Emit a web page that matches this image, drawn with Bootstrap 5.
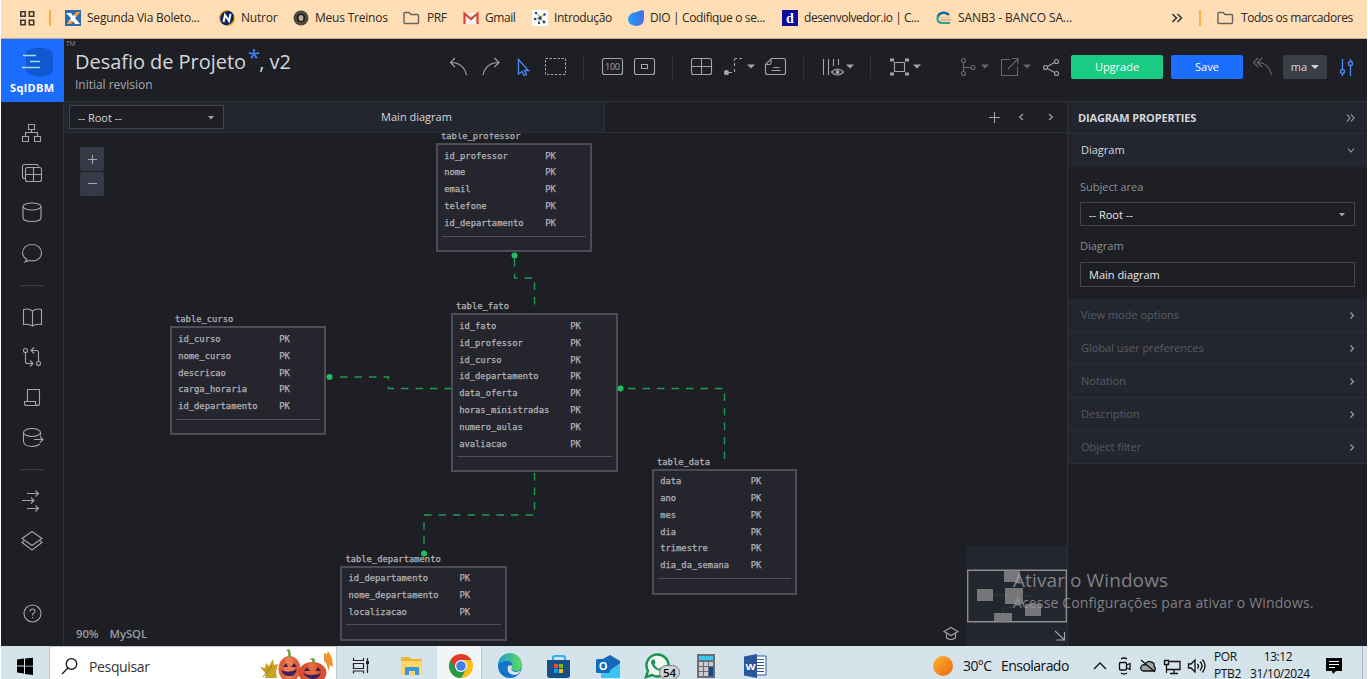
<!DOCTYPE html>
<html lang="pt-BR">
<head>
<meta charset="utf-8">
<meta name="viewport" content="width=device-width, initial-scale=1">
<title>Desafio de Projeto - SqlDBM</title>
<link href="https://cdn.jsdelivr.net/npm/bootstrap@5.3.0/dist/css/bootstrap.min.css" rel="stylesheet">
<style>
:root{--bg:#1e1f24;--panel:#23262e;--line:#2d3039;--ic:#a3a5ab;--dim:#575b65}
body{height:679px;overflow:hidden;background:#fff;font-family:"Open Sans","Noto Sans",sans-serif;font-size:11px;line-height:16px;color:#d5d7dc}
.screen{width:1366px;height:679px;margin-left:1px;background:var(--bg)}
svg{display:block;flex:none}
.txt{white-space:nowrap}
/* bookmarks */
.marks{height:39px;background:#ffddb5;border-bottom:1px solid #c9ad8b;color:#2c2824;padding-bottom:3px;font-size:12px}
.marks .bm{flex:none;gap:6px;white-space:nowrap}
.w154{width:154px}.w74{width:74px}.w110{width:110px}.w60{width:60px}.w69{width:69px}.w96{width:96px}
.w236{width:236px}
.bm .txt{letter-spacing:-.22px}
.bm .t-narrow{letter-spacing:-.45px}
.bm .t-mid{letter-spacing:-.36px}
.bm .t-wide{letter-spacing:-.1px}
/* header */
.topbar{height:62px}
.tools{padding-top:16px}
.logo{width:63px;height:63px;background:#1b6dff;z-index:2}
.logo text{font-family:"Open Sans",sans-serif}
.heading{width:381px;padding:9px 0 0 11px;position:relative}
.heading .ttl{font-size:20px;line-height:28px;letter-spacing:-.04px}
.heading .star{color:#3f86ff;font-size:22px;line-height:10px;position:relative;top:-4px;margin-left:2px;letter-spacing:-1px}
.heading .rev{font-size:12px;line-height:17px;color:#a5a7ac;letter-spacing:-.02px}
.heading .tm{position:absolute;left:2px;top:0;font-size:6.500px;line-height:9px;color:#8d9097}
.ic{fill:none;stroke:var(--ic);stroke-width:1.1}
.dimic{fill:none;stroke:#656870;stroke-width:1.1}
.btn-top{height:24px;padding:0;font-size:11px;line-height:24px;border:0;border-radius:2px;color:#fff;flex:none}
.b-up{width:92px;background:#1acb84}.b-save{width:72px;background:#1b6dff;margin-left:8px}.b-ma{width:44px;background:#3a3e49;color:#d5d7dc}
/* side */
.work{height:545px}
.side{width:63px;border-right:1px solid var(--line);padding-top:11px}
/* tabs */
.tabs{height:32px;border-top:1px solid var(--line);border-bottom:1px solid var(--line)}
.tabs .picker{width:155px;height:24px;margin:3px 0 0 5px;border:1px solid #41444f;background:var(--bg);padding:2px 8px 0}
.tabs .tab{width:541px;background:var(--panel);border-right:1px solid var(--line)}
.tabs .name{width:380px;padding:0 0 1px 5px}
/* canvas */
.canvas{position:relative;overflow:hidden;font-family:"DejaVu Sans Mono",monospace}
.ent{position:absolute;width:156px;font-size:8.8px;line-height:16.8px;color:#b3b3b7;-webkit-text-stroke:.25px #b3b3b7}
.ent .cap{position:absolute;left:5px;top:-15px;white-space:nowrap}
.ent .box{border:2px solid #4b4c58;background:#25252d;padding:2.6px 4px 0 3.500px;height:var(--h)}
.ent .r{height:16.8px;padding-left:2.700px}
.ent .r span:first-child{width:var(--k);flex:none}
.ent .rule{height:1px;background:#4f505b;margin-top:4px}
.zoomer{position:absolute;left:16px;top:14px;width:24px;gap:1px}
.zoomer div{height:24px;background:#363a46;border-radius:2px}
.foot{position:absolute;left:12px;top:493px;color:#9a9ca2;font-family:"Open Sans",sans-serif;font-size:11.3px;font-weight:600;gap:11px}
.foot span{letter-spacing:-.05px}
.wire{position:absolute;left:0;top:0}
/* properties */
.props-wrap{width:300px;border-left:1px solid var(--line)}
.p-head{height:32px;background:var(--panel);border-top:1px solid var(--line);padding:1px 12px 0 10px;font-weight:700;letter-spacing:-.15px}
.p-sec{height:34px;background:var(--panel);border-top:1px solid var(--line);padding:0 12px 1px 13px}
.p-form{height:132px;padding:12px 12px 0}
.p-form label{color:#8b8e96;height:16px;display:block}
.fld{height:24px;border:1px solid #41444f;padding:2px 8px 0;color:#e6e7ea;margin-top:7px}
.fld.tall{height:25px;margin-top:8px;padding-top:1px}
.p-form .second{margin-top:12px}
.p-row{height:33px;background:var(--panel);border-bottom:1px solid var(--line);padding:0 12px 0 13px;color:var(--dim)}
.wm{position:absolute;left:1012px;top:568px;color:rgba(158,158,160,.78);z-index:5}
.wm .a{font-size:19px;line-height:24px;letter-spacing:.1px}
.wm .b{font-size:14px;line-height:22px;letter-spacing:.14px}
/* taskbar */
.task{height:33px;background:#d5e3ea;color:#111;overflow:hidden}
.search{width:288px;background:#fff;border:1px solid #c3c8cb;border-bottom:0}
.search .q{width:168px;font-size:14px;padding:12px 0 0 1px;letter-spacing:-.35px;color:#333}
.chromecell{background:#f1f5f8}
.clock{font-size:12px;line-height:16.500px;letter-spacing:-.4px;padding-top:3px}
.c-lang{width:36px}.c-time{width:56px}
.wx{font-size:14px;padding-top:12px;width:125px}
.wx .deg{width:38px;letter-spacing:-.6px}
.wx .sky{letter-spacing:-.55px}
</style>
</head>
<body>
<div class="screen d-flex flex-column position-relative">

<div class="marks d-flex align-items-center">
  <svg width="64" height="36" viewBox="1 0 64 36"><g fill="none" stroke="#3c3833" stroke-width="1.6"><path d="M20.8 11.8h4.4v4.4h-4.4zM29.3 11.8h4.4v4.4h-4.4zM20.8 20.3h4.4v4.4h-4.4zM29.3 20.3h4.4v4.4h-4.4z"/></g><path d="M50 10v16" stroke="#ffad42" stroke-width="2"/></svg>
  <div class="bm w154 d-flex align-items-center"><svg width="16" height="16"><path d="M0 0h16v16H0z" fill="#2b6cae"/><path d="M1 3h5l2 3 4-4h3l-5 6 5 6h-5l-2-3-2 3H2l4-6z" fill="#fff"/><path d="M11 2h4l-4 5-2-2zM6 10l2 2-2 2H2z" fill="#f89b2d"/></svg><span class="txt">Segunda Via Boleto...</span></div>
  <div class="bm w74 d-flex align-items-center"><svg width="16" height="16"><circle cx="8" cy="8" r="7.5" fill="#17255e"/><path d="M1 11A7.5 7.5 0 0 1 8 .5M9 15.5A7.5 7.5 0 0 0 15.300 6" fill="none" stroke="#f3bf2a" stroke-width="1.600"/><path d="M4.500 12l1.500-7 4 6 1.500-7" fill="none" stroke="#fff" stroke-width="2"/></svg><span class="txt">Nutror</span></div>
  <div class="bm w110 d-flex align-items-center"><svg width="16" height="16"><circle cx="8" cy="8" r="7.500" fill="#4a463d"/><circle cx="8" cy="8" r="5" fill="#1d1c19" stroke="#5f5b4c" stroke-width="1"/><ellipse cx="8" cy="8" rx="2.400" ry="3" fill="#b5ae99"/></svg><span class="txt">Meus Treinos</span></div>
  <div class="bm w60 d-flex align-items-center"><svg width="18" height="16"><path d="M1 3.500q0-1 1-1h4l2 2h6.500q1 0 1 1v7q0 1-1 1H2q-1 0-1-1z" fill="none" stroke="#67625b" stroke-width="1.400"/></svg><span class="txt t-narrow">PRF</span></div>
  <div class="bm w69 d-flex align-items-center"><svg width="16" height="16"><path d="M1 3h14v11H1z" fill="#f3f0ef"/><path d="M1.500 14V3.500L8 9l6.500-5.500V14" fill="none" stroke="#db4437" stroke-width="2.200"/></svg><span class="txt t-narrow">Gmail</span></div>
  <div class="bm w96 d-flex align-items-center"><svg width="16" height="16"><path d="M0 0h16v16H0z" fill="#fff"/><path d="M4 3l5 4 4-3M3 9l5-1 4 4M7 13l1-6" stroke="#b9c98a" stroke-width="1.500" fill="none"/><g fill="#28406f"><circle cx="4" cy="3" r="1.200"/><circle cx="8" cy="8" r="1.700"/><circle cx="12.500" cy="4.500" r="1.200"/><circle cx="3" cy="9" r="1.200"/><circle cx="12" cy="12" r="1.400"/><circle cx="7" cy="13" r="1.200"/></g></svg><span class="txt t-mid">Introdução</span></div>
  <div class="bm w154 d-flex align-items-center"><svg width="16" height="16"><defs><linearGradient id="dio"><stop stop-color="#1aa0ef"/><stop offset="1" stop-color="#4b6be6"/></linearGradient></defs><path d="M0 9Q1 3 7 2.500L14 0q2 0 2 2v6q0 8-8 8-8-1-8-7" fill="url(#dio)"/></svg><span class="txt t-mid">DIO | Codifique o se...</span></div>
  <div class="bm w154 d-flex align-items-center"><svg width="16" height="16"><path d="M0 0h16v16H0z" fill="#0b0b9c"/><text x="4" y="13" font-size="14" font-weight="700" fill="#fff" font-family="Liberation Serif">d</text></svg><span class="txt t-narrow">desenvolvedor.io | C...</span></div>
  <div class="bm w236 d-flex align-items-center"><svg width="16" height="16"><path d="M2 7a6 5 0 0 1 11-2" fill="none" stroke="#136a95" stroke-width="2.500"/><path d="M2 6q-2 7 5 7h7" fill="none" stroke="#2aa48d" stroke-width="2.200"/><path d="M4 7.500h11" stroke="#d9cbb0" stroke-width="1.500"/><path d="M5 10h10" stroke="#e6946d" stroke-width="1.200"/></svg><span class="txt t-wide">SANB3 - BANCO SA...</span></div>
  <svg width="45" height="36" viewBox="1172 0 45 36"><path d="M1172.500 14l4 4-4 4M1177.500 14l4 4-4 4" fill="none" stroke="#3c3833" stroke-width="1.600"/><path d="M1200 10v16" stroke="#ffad42" stroke-width="2"/></svg>
  <div class="bm d-flex align-items-center"><svg width="18" height="16"><path d="M1 3.500q0-1 1-1h4l2 2h6.500q1 0 1 1v7q0 1-1 1H2q-1 0-1-1z" fill="none" stroke="#67625b" stroke-width="1.400"/></svg><span class="txt t-narrow">Todos os marcadores</span></div>
</div>

<header class="topbar d-flex">
  <svg class="logo position-relative" viewBox="1 39 63 63"><path d="M26 54q0-5 14-6.500 13 1.500 13 6.500v16q0 5-13 7-14-2-14-7z" fill="#1157d0"/><path d="M23 55.500h13M30 61.500h10M22 67.500h18" stroke="#a5dcff" stroke-width="1.600"/><text x="10" y="91.500" font-size="11" font-weight="700" fill="#fff" textLength="44">SqlDBM</text></svg>
  <div class="heading"><span class="tm">TM</span>
    <div class="ttl txt">Desafio de Projeto<span class="star">*</span>, v2</div>
    <div class="rev txt">Initial revision</div>
  </div>
  <div class="tools d-flex">
    <svg class="ic" width="62" height="24" viewBox="445 55 62 24"><path d="M455 58l-4.500 4.500 4.500 4.500M450.500 62.500q13 0 16 12.500M494.500 58l4.500 4.500-4.500 4.500M499 62.500q-13 0-16 12.500"/></svg>
    <svg width="65" height="24" viewBox="507 55 65 24"><path d="M518.500 59.500V74l3.500-2.500 2 4 2.500-1-2-4h4z" fill="none" stroke="#4b8bf5" stroke-width="1.300"/><path d="M545.500 58.500h20v16h-20z" fill="none" stroke="#a3a5ab" stroke-dasharray="2.500 1.500"/></svg>
    <svg class="ic" width="110" height="24" viewBox="572 55 110 24"><path d="M583.500 55v24M672.500 55v24" stroke="#2f323a"/><rect x="602.500" y="58.500" width="20" height="16" rx="2"/><rect x="634.500" y="58.500" width="20" height="16" rx="2"/><path d="M641.500 64.500h6v4h-6z"/><text x="605" y="70" font-size="9" textLength="15" fill="#a3a5ab" stroke="none">100</text></svg>
    <svg class="ic" width="128" height="24" viewBox="682 55 128 24"><rect x="691.500" y="58.500" width="20" height="16" rx="2"/><path d="M701.500 58.500v16M691.500 66.500h20"/><circle cx="726.500" cy="72.500" r="2" fill="#a3a5ab"/><path d="M728 72.500h4M734.500 72v-3M734.500 66v-3M734.500 61v-1.500q0-1 1-1H737M739.500 58.500h2.500"/><path d="M747 64.500h8l-4 4z" fill="#a3a5ab" stroke="none"/><path d="M771.500 58.500h12q2 0 2 2v12q0 2-2 2h-16q-2 0-2-2v-8zM765.500 64.500h4q1.500 0 1.500-1.500v-4M773.500 67.500h6M771.500 70.500h9"/><path d="M803.500 55v24" stroke="#2f323a"/></svg>
    <svg class="ic" width="135" height="24" viewBox="810 55 135 24"><path d="M823.500 59v16M828.500 59v16M833.500 59v7M838.500 59v6"/><path d="M831.500 72q6-6 12 0-6 6-12 0z"/><circle cx="837.500" cy="72" r="1.500" fill="#a3a5ab"/><path d="M846 64.500h8l-4 4zM913 64.500h8l-4 4z" fill="#a3a5ab" stroke="none"/><path d="M870.500 55v24" stroke="#2f323a"/><path d="M894.500 62.500h10v9h-10z"/><path d="M890 58.500h4v3h-4zM905 58.500h4v3h-4zM890 72.500h4v3h-4zM905 72.500h4v3h-4z" fill="#a3a5ab" stroke="none"/></svg>
    <svg class="dimic" width="126" height="24" viewBox="945 55 126 24"><circle cx="963.500" cy="60.500" r="2"/><circle cx="963.500" cy="73.500" r="2"/><circle cx="973" cy="67.500" r="2"/><path d="M963.500 62.500v9M963.500 67.500h7.500"/><path d="M981 64.500h8l-4 4zM1023 64.500h8l-4 4z" fill="#656870" stroke="none"/><path d="M1010 59.500h-8.500v16h16v-9M1008 69l10-10M1012 58.500h6v6"/><g stroke="#a3a5ab"><circle cx="1045.500" cy="67.500" r="2"/><circle cx="1056.500" cy="61.500" r="2"/><circle cx="1056.500" cy="73.500" r="2"/><path d="M1047.500 66.500l7-4M1047.500 68.500l7 4"/></g></svg>
    <button class="btn btn-top b-up">Upgrade</button><button class="btn btn-top b-save">Save</button>
    <svg class="dimic" width="40" height="24" viewBox="1243 55 40 24"><path d="M1258 58l-4.500 4.500 4.500 4.500M1262 58l-4.500 4.500 4.500 4.500M1257.500 62.500q11 0 14 12.500"/></svg>
    <button class="btn btn-top b-ma d-flex align-items-center justify-content-center gap-1">ma <svg width="8" height="4"><path d="M0 0h8L4 4z" fill="#d5d7dc"/></svg></button>
    <svg width="40" height="24" viewBox="1327 55 40 24"><g fill="none" stroke="#4b8bf5" stroke-width="1.300"><path d="M1342.500 59v10M1342.500 74v2M1350.500 59v2M1350.500 66v10"/><circle cx="1342.500" cy="71.500" r="2"/><circle cx="1350.500" cy="63.500" r="2"/></g></svg>
  </div>
</header>

<div class="work d-flex">
  <nav class="side flex-shrink-0">
    <svg class="ic" width="62" height="533" viewBox="1 112 62 533">
      <path d="M28.500 124.500h6v5h-6zM22.500 136.500h6v5h-6zM34.500 136.500h6v5h-6zM31.500 129.500v3M25.500 136.500v-4h12v4"/>
      <rect x="25.500" y="167.500" width="16" height="14" rx="2"/><path d="M33.500 167.500v14M25.500 174.500h16M25 178.500h-.500q-2 0-2-2v-10q0-2 2-2h12q2 0 2 2"/>
      <ellipse cx="32" cy="206.500" rx="9" ry="3.500"/><path d="M23 206.500v11q0 4 9 4t9-4v-11"/>
      <path d="M27 259.500q-4-2-4.500-6.500c0-5 4-8.500 9.500-8.500s9.500 3.500 9.500 8.500-5 9-12 7.500l-4.500 1.500z"/>
      <path d="M20 285.500h24M20 469.500h24" stroke="#3b3e46"/>
      <path d="M23.500 309.500q5-1.500 9 1.500 4-3 9-1.500v15q-5-1-9 1.500-4-2.500-9-1.500zM32.500 311v15"/>
      <circle cx="25.500" cy="350.500" r="2"/><circle cx="38.500" cy="363.500" r="2"/><path d="M25.500 352.500v9q0 2 2 2h5M30 360.500l3 3-3 3M38.500 361.500v-9q0-2-2-2h-5M34 347.500l-3 3 3 3"/>
      <path d="M27.500 401.500v-12h12v14q0 2-2 2h-11q-2 0-2-2v-2h11v2q0 2 2 2"/>
      <ellipse cx="32" cy="432.500" rx="8.500" ry="4"/><path d="M23.500 432.500v9q1 5 8.500 5 5 0 8-2.500M40.500 432.500v3M34 439.500h9M40 436.500l3 3-3 3"/>
      <path d="M27 493.500h11M35.500 490.500l3 3-3 3M22 500.500h11M31 497.500l3 3-3 3M27 508.500h11M35.500 505.500l3 3-3 3"/>
      <path d="M32 531.500l10 7-10 7-10-7zM24 541l-2 1.500 10 7.500 10-7.500-2-1.500"/>
      <circle cx="32.500" cy="613.500" r="8.500"/><path d="M30 611.500q0-2.500 2.500-2.500t2.500 2.300q0 1.200-1.300 2-1.200.7-1.200 2.200M32.500 617v1.200"/>
    </svg>
  </nav>
  <main class="flex-grow-1 d-flex flex-column">
    <div class="tabs d-flex">
      <div class="tab d-flex"><div class="picker d-flex align-items-center justify-content-between flex-shrink-0"><span>-- Root --</span><svg width="8" height="4"><path d="M1 0h6L4 3.500z" fill="#a3a5ab"/></svg></div><div class="name text-center align-self-center">Main diagram</div></div>
      <svg class="ic ms-auto" width="87" height="30" viewBox="980 102 87 30"><path d="M989 117.500h11M994.500 112v11M1023 114l-3.500 3 3.500 3M1049 114l3.500 3-3.500 3"/></svg>
    </div>
    <div class="canvas flex-grow-1">
      <svg class="wire" width="1003" height="513" viewBox="64 133 1003 513"><g fill="none" stroke="#209a52" stroke-width="1.400" stroke-dasharray="7.500 7"><path d="M514.500 259v19h20v27"/><path d="M340 377h48.500v11.500H451"/><path d="M628 388.500h96.500V462"/><path d="M534.500 473v42H424v40"/></g></svg>
      <div class="ent" style="left:372px;top:10px;--h:109px;--k:101px"><div class="cap">table_professor</div><div class="box"><div class="r d-flex"><span>id_professor</span><span>PK</span></div><div class="r d-flex"><span>nome</span><span>PK</span></div><div class="r d-flex"><span>email</span><span>PK</span></div><div class="r d-flex"><span>telefone</span><span>PK</span></div><div class="r d-flex"><span>id_departamento</span><span>PK</span></div><div class="rule"></div></div></div>
      <div class="ent" style="left:106px;top:193.400px;--h:109px;--k:101px"><div class="cap">table_curso</div><div class="box"><div class="r d-flex"><span>id_curso</span><span>PK</span></div><div class="r d-flex"><span>nome_curso</span><span>PK</span></div><div class="r d-flex"><span>descricao</span><span>PK</span></div><div class="r d-flex"><span>carga_horaria</span><span>PK</span></div><div class="r d-flex"><span>id_departamento</span><span>PK</span></div><div class="rule"></div></div></div>
      <div class="ent" style="left:387px;top:180.400px;width:167px;--h:159px;--k:111px"><div class="cap">table_fato</div><div class="box"><div class="r d-flex"><span>id_fato</span><span>PK</span></div><div class="r d-flex"><span>id_professor</span><span>PK</span></div><div class="r d-flex"><span>id_curso</span><span>PK</span></div><div class="r d-flex"><span>id_departamento</span><span>PK</span></div><div class="r d-flex"><span>data_oferta</span><span>PK</span></div><div class="r d-flex"><span>horas_ministradas</span><span>PK</span></div><div class="r d-flex"><span>numero_aulas</span><span>PK</span></div><div class="r d-flex"><span>avaliacao</span><span>PK</span></div><div class="rule"></div></div></div>
      <div class="ent" style="left:588px;top:335.700px;width:145.400px;--h:126px;--k:90.500px"><div class="cap">table_data</div><div class="box"><div class="r d-flex"><span>data</span><span>PK</span></div><div class="r d-flex"><span>ano</span><span>PK</span></div><div class="r d-flex"><span>mes</span><span>PK</span></div><div class="r d-flex"><span>dia</span><span>PK</span></div><div class="r d-flex"><span>trimestre</span><span>PK</span></div><div class="r d-flex"><span>dia_da_semana</span><span>PK</span></div><div class="rule"></div></div></div>
      <div class="ent" style="left:276.400px;top:432.500px;width:167px;--h:75.500px;--k:111px"><div class="cap">table_departamento</div><div class="box"><div class="r d-flex"><span>id_departamento</span><span>PK</span></div><div class="r d-flex"><span>nome_departamento</span><span>PK</span></div><div class="r d-flex"><span>localizacao</span><span>PK</span></div><div class="rule"></div></div></div>
      <svg class="wire" width="1003" height="513" viewBox="64 133 1003 513"><g fill="#20bf5f"><circle cx="514.500" cy="255.500" r="3"/><circle cx="329.500" cy="377" r="3"/><circle cx="620.500" cy="388.500" r="3"/><circle cx="424" cy="553.500" r="3"/></g>
        <path d="M967 546h100v100H967z" fill="#23262f"/><g fill="#77777a"><path d="M1004 571h16v11h-16zM977 589h16v12h-16zM1005 588h18v16h-18zM1025 604h16v12h-16zM994 613h18v9h-18z"/></g><path d="M993 595h12M1003 613v-5h10v-4M1022 596h10v8" stroke="#34383f" fill="none"/><path d="M967.700 570.300h98.600v51.400h-98.600z" fill="none" stroke="#8c8c8e" stroke-width="1.400"/>
        <path d="M1055 631l9.500 9M1064.500 632v8h-8" class="ic"/><path class="ic" d="M951 627.500l7 4-7 4-7-4zM946.500 633.500v4.500q4.500 3 9 0v-4.500"/></svg>
      <div class="zoomer d-grid"><div><svg width="24" height="24"><path d="M8 12.500h9M12.500 8v9" class="ic"/></svg></div><div><svg width="24" height="24"><path d="M8 11.500h9" class="ic"/></svg></div></div>
      <div class="foot d-flex"><span>90%</span><span>MySQL</span></div>
    </div>
  </main>
  <aside class="props-wrap flex-shrink-0">
    <div class="p-head d-flex align-items-center justify-content-between"><span>DIAGRAM PROPERTIES</span><svg class="ic" width="9" height="8"><path d="M1 .500L4 4 1 7.500M5 .500L8 4 5 7.500"/></svg></div>
    <div class="p-sec d-flex align-items-center justify-content-between"><span>Diagram</span><svg class="ic" width="8" height="5"><path d="M1 .500L4 4l3-3.500"/></svg></div>
    <div class="p-form">
      <label>Subject area</label>
      <div class="fld d-flex align-items-center justify-content-between"><span>-- Root --</span><svg width="8" height="4"><path d="M1 0h6L4 3.500z" fill="#a3a5ab"/></svg></div>
      <label class="second">Diagram</label>
      <div class="fld tall d-flex align-items-center">Main diagram</div>
    </div>
    <div class="p-row d-flex align-items-center justify-content-between"><span>View mode options</span><svg class="ic" width="6" height="9"><path d="M1.500 1.500l3 3-3 3"/></svg></div>
    <div class="p-row d-flex align-items-center justify-content-between"><span>Global user preferences</span><svg class="ic" width="6" height="9"><path d="M1.500 1.500l3 3-3 3"/></svg></div>
    <div class="p-row d-flex align-items-center justify-content-between"><span>Notation</span><svg class="ic" width="6" height="9"><path d="M1.500 1.500l3 3-3 3"/></svg></div>
    <div class="p-row d-flex align-items-center justify-content-between"><span>Description</span><svg class="ic" width="6" height="9"><path d="M1.500 1.500l3 3-3 3"/></svg></div>
    <div class="p-row d-flex align-items-center justify-content-between"><span>Object filter</span><svg class="ic" width="6" height="9"><path d="M1.500 1.500l3 3-3 3"/></svg></div>
  </aside>
</div>

<div class="wm"><div class="a txt">Ativar o Windows</div><div class="b txt">Acesse Configurações para ativar o Windows.</div></div>

<footer class="task d-flex">
  <svg width="48" height="33" viewBox="1 646 48 33"><path d="M17 659.500l7-1v7h-7zM25 658.500l8-.8v8h-8zM17 666.500h7v7l-7-1zM25 666.500h8v8.500l-8-1z" fill="#000"/></svg>
  <div class="search d-flex">
    <svg width="38" height="32" viewBox="50 647 38 32"><circle cx="71.500" cy="664" r="5.300" fill="none" stroke="#111" stroke-width="1.300"/><path d="M68 668l-6 6" stroke="#111" stroke-width="1.300"/></svg>
    <div class="q">Pesquisar</div>
    <svg width="80" height="32" viewBox="256 647 80 32"><path d="M260 667l5 1 1-5 3 3 4-7 1 6 4-1-2 8 1 6h-12l1-4z" fill="#c9a227"/><path d="M263 677l9-11" stroke="#8a7a1c"/><ellipse cx="289.500" cy="669" rx="11" ry="13" fill="#e0603c"/><ellipse cx="289" cy="668" rx="5" ry="12" fill="#ee7c52"/><ellipse cx="312.500" cy="673" rx="14" ry="11" fill="#d9502f"/><ellipse cx="312" cy="673" rx="6" ry="11" fill="#e8673d"/><path d="M286 650q3 1 2 7h3q0-6-2-8M309 659q4 0 3 4h3q1-4-2-5" fill="#6fa544"/><path d="M283 667l3-4 2 4zM291 667l3-4 3 4zM281 670q8 4 16-1-2 8-8 7-6 0-8-6M304 671l3-4 3 4zM315 671l3-4 3 4zM303 673q9 4 18 0-3 7-9 6t-9-6" fill="#40205b"/><path d="M324 653l3 1 1-3 4 7 1 9-3-2-1 6-3-8-2-2z" fill="#f0932f"/></svg>
  </div>
  <svg width="100" height="33" viewBox="337 646 100 33"><g fill="none" stroke="#222" stroke-width="1.200"><path d="M353.500 658v2.500h10v-2.500M353.500 673.500v-2.500h10v2.500M353.500 663.500h10v5h-10zM367.500 658v15"/><path d="M366 661h3v3h-3z" fill="#222" stroke="none"/></g><path d="M401 657h8l2 2h11v16h-21z" fill="#eab530"/><path d="M401 661h21v14h-21z" fill="#ffd768"/><path d="M405 675v-8h14v8h-4v-4h-6v4z" fill="#3a97dd"/></svg>
  <svg class="chromecell" width="45" height="33" viewBox="437 646 45 33"><circle cx="461" cy="666" r="12" fill="#fbbf12"/><path d="M450.600 660A12 12 0 0 0 461 678l5.200-9L461 666z" fill="#27984b"/><path d="M461 660h10.400a12 12 0 0 0-20.800 0l5.200 9z" fill="#e33b2e"/><circle cx="461" cy="666" r="6" fill="#fff"/><circle cx="461" cy="666" r="4.800" fill="#3d7ff0"/><path d="M481.500 646v33" stroke="#b9c9d3"/></svg>
  <svg width="310" height="33" viewBox="482 646 310 33">
    <defs><linearGradient id="ed" x1="0" x2="1"><stop stop-color="#1f9ddc"/><stop offset="1" stop-color="#5fdc58"/></linearGradient></defs>
    <circle cx="510" cy="666" r="12" fill="#1273c8"/><path d="M498 665a12 12 0 0 1 24 0q0 7-8 6-4-1-2-4 1-6-5-6-6 0-9 4" fill="url(#ed)"/><path d="M512 667q-2 4 3 5 4 0 6-2-2 5-7 5-8-1-6-9 4-2 4 1" fill="#d5e3ea"/>
    <path d="M553 660v-2q0-2 2-2h8q2 0 2 2v2" fill="none" stroke="#29b6ee" stroke-width="2.200"/><path d="M547 660h23v15q0 3-3 3h-17q-3 0-3-3z" fill="#174f86"/><path d="M554 664h4v4h-4z" fill="#f2511b"/><path d="M559 664h4v4h-4z" fill="#7eba00"/><path d="M554 669h4v4h-4z" fill="#00a3ee"/><path d="M559 669h4v4h-4z" fill="#fdb813"/>
    <path d="M601 660l9-5 10 6v14q0 3-3 3h-13q-3 0-3-3z" fill="#1b65b8"/><path d="M601 671l8 0 11-8v12q0 3-3 3h-13q-3 0-3-3z" fill="#3bc3f2"/><rect x="596" y="659" width="14" height="14" rx="1.500" fill="#0f6cbd"/><text x="598.800" y="670" font-size="11" font-weight="700" fill="#fff">O</text>
    <path d="M646 677l2-6a11 11 0 1 1 4 4z" fill="#eef7f0" stroke="#1b9153" stroke-width="2.400"/><path d="M652 660q2-2 3 1t-1 3q2 4 5 5 2-3 4-1 2 2-1 3-8 0-11-8 0-2 1-3" fill="#1b9153"/><rect x="659.500" y="665.500" width="20" height="14" rx="7" fill="#d0d3d3" stroke="#777"/><text x="663" y="676.500" font-size="11.500" font-weight="600" fill="#000" textLength="13">54</text>
    <path d="M697 654h18v24h-18z" fill="#6b6f73"/><path d="M699 656h14v4h-14z" fill="#39c6ef"/><path d="M699 662h4v4h-4zM704 662h4v4h-4zM709 662h4v4h-4zM699 667h4v4h-4zM704 667h4v4h-4zM699 672h4v4h-4zM704 672h4v4h-4z" fill="#c9cccf"/><path d="M709 667h4v9h-4z" fill="#0c4c8c"/>
    <path d="M756 656h10v19h-10z" fill="#fff" stroke="#2b579a"/><path d="M757 659.500h7M757 662.500h7M757 665.500h7M757 668.500h7M757 671.500h7" stroke="#2b579a"/><path d="M744 656.500l13-2.500v24l-13-2.500z" fill="#2b579a"/><text x="745.500" y="670" font-size="9.500" font-weight="700" fill="#fff" textLength="10" lengthAdjust="spacingAndGlyphs">W</text>
  </svg>
  <svg width="171" height="33" viewBox="792 646 171 33"><defs><linearGradient id="sun" x2="1" y2="1"><stop stop-color="#f8b62d"/><stop offset="1" stop-color="#f4640f"/></linearGradient></defs><circle cx="943" cy="666" r="10" fill="url(#sun)"/></svg>
  <div class="wx d-flex"><span class="txt deg">30°C</span><span class="txt sky">Ensolarado</span></div>
  <svg width="126" height="33" viewBox="1088 646 126 33"><g fill="none" stroke="#111" stroke-width="1.300"><path d="M1094 669l6-6 6 6"/><rect x="1119.500" y="662.500" width="7" height="7.500" rx="1"/><path d="M1127 665l3-1.500v6l-3-1.500M1121 659q3-2 6 0M1121 673q3 2 6 0"/><path d="M1143 671q-3-1-2-4t4-2q2-5 6-3 4 1 3 4 3 4-1 5z" fill="#9ea6aa"/><path d="M1141 660l14 12"/><path d="M1169 661.500h11v8h-13M1174 670v3M1170 673.500h8M1164.500 660.500h4v4h-4zM1166.500 665v8"/><path d="M1188.500 664h2.500l4-4v12l-4-4h-2.500zM1197.500 664q2 2 0 4.500M1200 661.500q4 4 0 9M1202.500 659.500q5 6 0 13"/></g></svg>
  <div class="clock c-lang txt">POR<br>PTB2</div>
  <div class="clock c-time txt text-center">13:12<br>31/10/2024</div>
  <svg width="61" height="33" viewBox="1306 646 61 33"><path d="M1326 658h16v13h-6l-3 3-1-3h-6z" fill="#000"/><path d="M1329 661.500h10M1329 664.500h10M1329 667.500h6" stroke="#fff"/><path d="M1362.500 646v33" stroke="#a9b6bd"/></svg>
</footer>
</div>
<script src="https://cdn.jsdelivr.net/npm/bootstrap@5.3.0/dist/js/bootstrap.bundle.min.js"></script>
</body>
</html>
